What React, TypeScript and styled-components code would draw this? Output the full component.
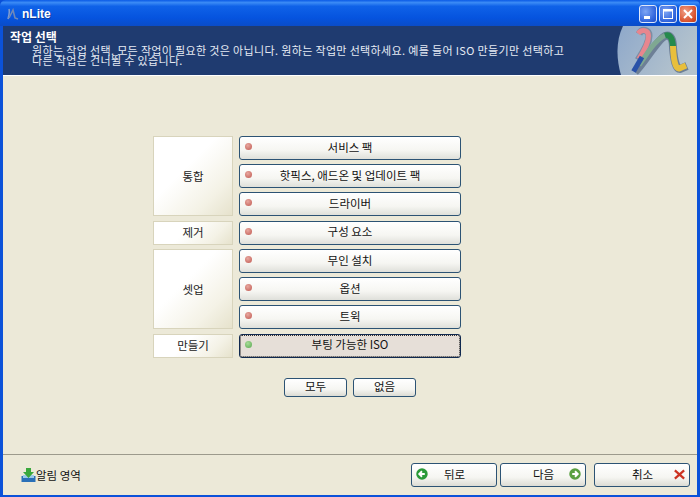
import styled, { createGlobalStyle } from "styled-components";

const FONT = `"Noto Sans CJK KR", "Liberation Sans", sans-serif`;

const SECTIONS = [
  {
    label: "통합",
    items: ["서비스 팩", "핫픽스, 애드온 및 업데이트 팩", "드라이버"],
  },
  { label: "제거", items: ["구성 요소"] },
  { label: "셋업", items: ["무인 설치", "옵션", "트윅"] },
  { label: "만들기", items: ["부팅 가능한 ISO"], active: true },
];

const GlobalStyle = createGlobalStyle`
  html, body {
    margin: 0;
    padding: 0;
    background: #0a4fd8;
  }
  * {
    box-sizing: border-box;
  }
`;

const Window = styled.div`
  width: 700px;
  height: 497px;
  display: flex;
  flex-direction: column;
  overflow: hidden;
  font-family: ${FONT};
  background: #0b52d9;
  padding: 0 3px 2px;
  border-radius: 6px 6px 0 0;
`;

const TitleBar = styled.div`
  height: 26px;
  margin: 0 -3px;
  padding: 1px 3px 0 5px;
  display: flex;
  align-items: center;
  gap: 3px;
  flex-shrink: 0;
  background: linear-gradient(180deg, #0a5ae6 0%, #3b8bf5 10%, #0f62e8 24%, #0553de 70%, #0a4cc8 100%);
`;

const TitleText = styled.span`
  font-family: "Liberation Sans", sans-serif;
  font-size: 12px;
  font-weight: 700;
  color: #fff;
  text-shadow: 1px 1px 0 #0b3a9e;
`;

const WindowControls = styled.div`
  margin-left: auto;
  display: flex;
  gap: 2px;
`;

const ControlButton = styled.div<{ $close?: boolean }>`
  width: 18px;
  height: 18px;
  border: 1px solid #dfe8fb;
  border-radius: 3px;
  display: flex;
  align-items: center;
  justify-content: center;
  background: ${(p) =>
    p.$close
      ? "radial-gradient(circle at 35% 35%, #f0a088, #d8502c 70%, #b83a18)"
      : "radial-gradient(circle at 35% 35%, #7ea6f4, #2f63dc 70%, #2450c4)"};
`;

const Header = styled.header`
  height: 50px;
  flex-shrink: 0;
  display: flex;
  background: #1f3b70;
  border-bottom: 1px solid #fff;
  overflow: hidden;
`;

const HeaderText = styled.div`
  flex: 1;
  padding: 5px 0 0 7px;
  color: #fff;
  white-space: nowrap;
`;

const HeaderTitle = styled.div`
  font-size: 12px;
  font-weight: 700;
  line-height: 12px;
`;

const HeaderDescription = styled.div`
  margin-top: 2px;
  padding-left: 22px;
  font-size: 11px;
  letter-spacing: 0.35px;
  line-height: 10px;
  color: #e6ebf4;
`;

const Logo = styled.svg`
  width: 80px;
  height: 49px;
  flex-shrink: 0;
`;

const Content = styled.main`
  flex: 1;
  min-height: 0;
  background: #ece9d8;
  padding: 60px 0 0 150px;
  border-bottom: 1px solid #9c9a8c;
`;

const TaskGrid = styled.div`
  width: 308px;
  display: flex;
  flex-direction: column;
  gap: 4.5px;
`;

const TaskSection = styled.section`
  display: grid;
  grid-template-columns: 80px 222px;
  column-gap: 6px;
`;

const SectionLabel = styled.div`
  display: flex;
  align-items: center;
  justify-content: center;
  padding-bottom: 1px;
  font-size: 11.5px;
  color: #222;
  border: 1px solid #d8d4bc;
  background: linear-gradient(135deg, #ffffff 40%, #f4f2e6 75%, #e6e2cc 100%);
`;

const TaskList = styled.div`
  display: flex;
  flex-direction: column;
  gap: 4px;
`;

const TaskButton = styled.button<{ $active?: boolean }>`
  position: relative;
  height: 24px;
  width: 222px;
  padding: 0 0 3px;
  font-family: ${FONT};
  font-size: 11.5px;
  color: #111;
  border: 1px solid ${(p) => (p.$active ? "#10294f" : "#2c5374")};
  border-radius: 3px;
  background: ${(p) =>
    p.$active
      ? "#e6dfd8"
      : "linear-gradient(180deg, #ffffff 0%, #f6f6f2 60%, #dfe0da 100%)"};
  outline: ${(p) => (p.$active ? "1px dotted #333" : "none")};
  outline-offset: -2px;
`;

const StatusDot = styled.span<{ $active?: boolean }>`
  position: absolute;
  left: 5px;
  top: 6px;
  width: 7px;
  height: 7px;
  border-radius: 50%;
  background: ${(p) =>
    p.$active
      ? "radial-gradient(circle at 40% 35%, #a8dc98, #58a850)"
      : "radial-gradient(circle at 40% 35%, #e8a8a0, #c05850)"};
`;

const SelectRow = styled.div`
  display: flex;
  gap: 6px;
  margin: 20.5px 0 0 131px;
`;

const SmallButton = styled.button`
  width: 63px;
  height: 19px;
  padding: 0 0 2px;
  font-family: ${FONT};
  font-size: 11.5px;
  line-height: 15px;
  color: #111;
  border: 1px solid #2c5374;
  border-radius: 3px;
  background: linear-gradient(180deg, #ffffff 0%, #f6f6f2 60%, #dcdcd4 100%);
`;

const Footer = styled.footer`
  height: 40px;
  flex-shrink: 0;
  display: flex;
  align-items: center;
  background: #ece9d8;
  padding: 0 7px 0 18px;
`;

const TrayHint = styled.div`
  display: flex;
  align-items: center;
  font-size: 11.5px;
  color: #111;
`;

const NavGroup = styled.div`
  margin-left: auto;
  display: flex;
  gap: 8px;
`;

const NavPair = styled.div`
  display: flex;
  gap: 3px;
`;

const NavButton = styled.button<{ $wide?: boolean }>`
  width: ${(p) => (p.$wide ? 96 : 86)}px;
  height: 24px;
  padding: 0 3px 2px 4px;
  display: grid;
  grid-template-columns: 13px 1fr 13px;
  align-items: center;
  font-family: ${FONT};
  font-size: 11.5px;
  color: #111;
  border: 1px solid #2c5374;
  border-radius: 3px;
  background: linear-gradient(180deg, #ffffff 0%, #f6f6f2 60%, #dcdcd4 100%);
`;

const NavLabel = styled.span`
  text-align: center;
`;

const AppIcon = () => (
  <svg width="14" height="14" viewBox="0 0 14 14">
    <path d="M3 12 C4 8 5 5 4 2" stroke="#7f9cd0" strokeWidth="1.6" fill="none" />
    <path d="M4 11 L8 3 L10 11 L13 12" stroke="#6f88b8" strokeWidth="1.6" fill="none" />
  </svg>
);

const MinimizeIcon = () => (
  <svg width="12" height="12" viewBox="0 0 12 12">
    <rect x="2" y="8" width="6" height="3" fill="#fff" />
  </svg>
);

const MaximizeIcon = () => (
  <svg width="12" height="12" viewBox="0 0 12 12">
    <rect x="1.5" y="1.5" width="9" height="9" fill="none" stroke="#fff" />
    <rect x="1" y="1" width="10" height="2.5" fill="#fff" />
  </svg>
);

const CloseIcon = () => (
  <svg width="12" height="12" viewBox="0 0 12 12">
    <path d="M2 2 L10 10 M10 2 L2 10" stroke="#fff" strokeWidth="2" />
  </svg>
);

const ArrowIcon = ({ left }: { left?: boolean }) => (
  <svg width="12" height="12" viewBox="0 0 13 13">
    <circle cx="6.5" cy="6.5" r="6.2" fill={left ? "#2a9a38" : "#5aa040"} />
    <path
      d={left ? "M9.5 6.5 H4 M6.5 3.5 L3.5 6.5 L6.5 9.5" : "M3.5 6.5 H9 M6.5 3.5 L9.5 6.5 L6.5 9.5"}
      stroke="#fff"
      strokeWidth="2"
      fill="none"
    />
  </svg>
);

const CancelIcon = () => (
  <svg width="13" height="13" viewBox="0 0 14 14">
    <path d="M2 2.5 L12 11.5 M12 2.5 L2 11.5" stroke="#cc3322" strokeWidth="2.4" />
  </svg>
);

const TrayIcon = () => (
  <svg width="15" height="14" viewBox="0 0 15 14">
    <path d="M0.5 8 H14.5 V14 H0.5 Z" fill="#2a70b8" />
    <path d="M2 7 H13 V10 H2 Z" fill="#9ccbe8" />
    <path d="M5 0 H10 V4 H13 L7.5 10 L2 4 H5 Z" fill="#3aa83c" />
  </svg>
);

export default function App() {
  return (
    <Window>
      <GlobalStyle />
      <TitleBar>
        <AppIcon />
        <TitleText>nLite</TitleText>
        <WindowControls>
          <ControlButton><MinimizeIcon /></ControlButton>
          <ControlButton><MaximizeIcon /></ControlButton>
          <ControlButton $close><CloseIcon /></ControlButton>
        </WindowControls>
      </TitleBar>

      <Header>
        <HeaderText>
          <HeaderTitle>작업 선택</HeaderTitle>
          <HeaderDescription>
            원하는 작업 선택. 모든 작업이 필요한 것은 아닙니다. 원하는 작업만 선택하세요. 예를 들어 ISO 만들기만 선택하고
            <br />
            다른 작업은 건너뛸 수 있습니다.
          </HeaderDescription>
        </HeaderText>
        <Logo viewBox="0 0 80 49">
          <defs>
            <linearGradient id="logoBg" x1="0" y1="0" x2="1" y2="0.4">
              <stop offset="0" stopColor="#8ea8ca" />
              <stop offset="1" stopColor="#b4c3cd" />
            </linearGradient>
          </defs>
          <path d="M6 0 H80 V49 H4 C-1 32 -1 14 6 0 Z" fill="url(#logoBg)" />
          <path d="M18 46 C28 36 40 14 48 10 C54 8 56 14 56 22 C57 34 59 43 63 43 L70 40" stroke="#6d7f96" strokeWidth="8" fill="none" />
          <path d="M22 8 C25 2 32 4 32 10 C32 18 26 26 21 34" stroke="#7d8ea4" strokeWidth="7" fill="none" />
          <path d="M21 7.5 C25 2.5 31.5 4 31.5 10 C31.5 17 27 25 22 33" stroke="#e8868e" strokeWidth="5" fill="none" />
          <path d="M22 39 C30 28 38 14 48 9.5" stroke="#7fa892" strokeWidth="5" fill="none" />
          <path d="M16.5 45.5 L25 31" stroke="#2a52a8" strokeWidth="5" fill="none" />
          <path d="M48 9.5 C53 8 55.5 12 56 21" stroke="#268a4c" strokeWidth="6" fill="none" />
          <path d="M56 20 C56.5 32 58 43 62 42.5 L69 39.5" stroke="#e8bf3c" strokeWidth="6" fill="none" />
        </Logo>
      </Header>

      <Content>
        <TaskGrid>
          {SECTIONS.map((section) => (
            <TaskSection key={section.label}>
              <SectionLabel>{section.label}</SectionLabel>
              <TaskList>
                {section.items.map((item) => (
                  <TaskButton key={item} $active={section.active}>
                    <StatusDot $active={section.active} />
                    {item}
                  </TaskButton>
                ))}
              </TaskList>
            </TaskSection>
          ))}
        </TaskGrid>
        <SelectRow>
          <SmallButton>모두</SmallButton>
          <SmallButton>없음</SmallButton>
        </SelectRow>
      </Content>

      <Footer>
        <TrayHint>
          <TrayIcon />
          알림 영역
        </TrayHint>
        <NavGroup>
          <NavPair>
            <NavButton>
              <ArrowIcon left />
              <NavLabel>뒤로</NavLabel>
            </NavButton>
            <NavButton>
              <span />
              <NavLabel>다음</NavLabel>
              <ArrowIcon />
            </NavButton>
          </NavPair>
          <NavButton $wide>
            <span />
            <NavLabel>취소</NavLabel>
            <CancelIcon />
          </NavButton>
        </NavGroup>
      </Footer>
    </Window>
  );
}
